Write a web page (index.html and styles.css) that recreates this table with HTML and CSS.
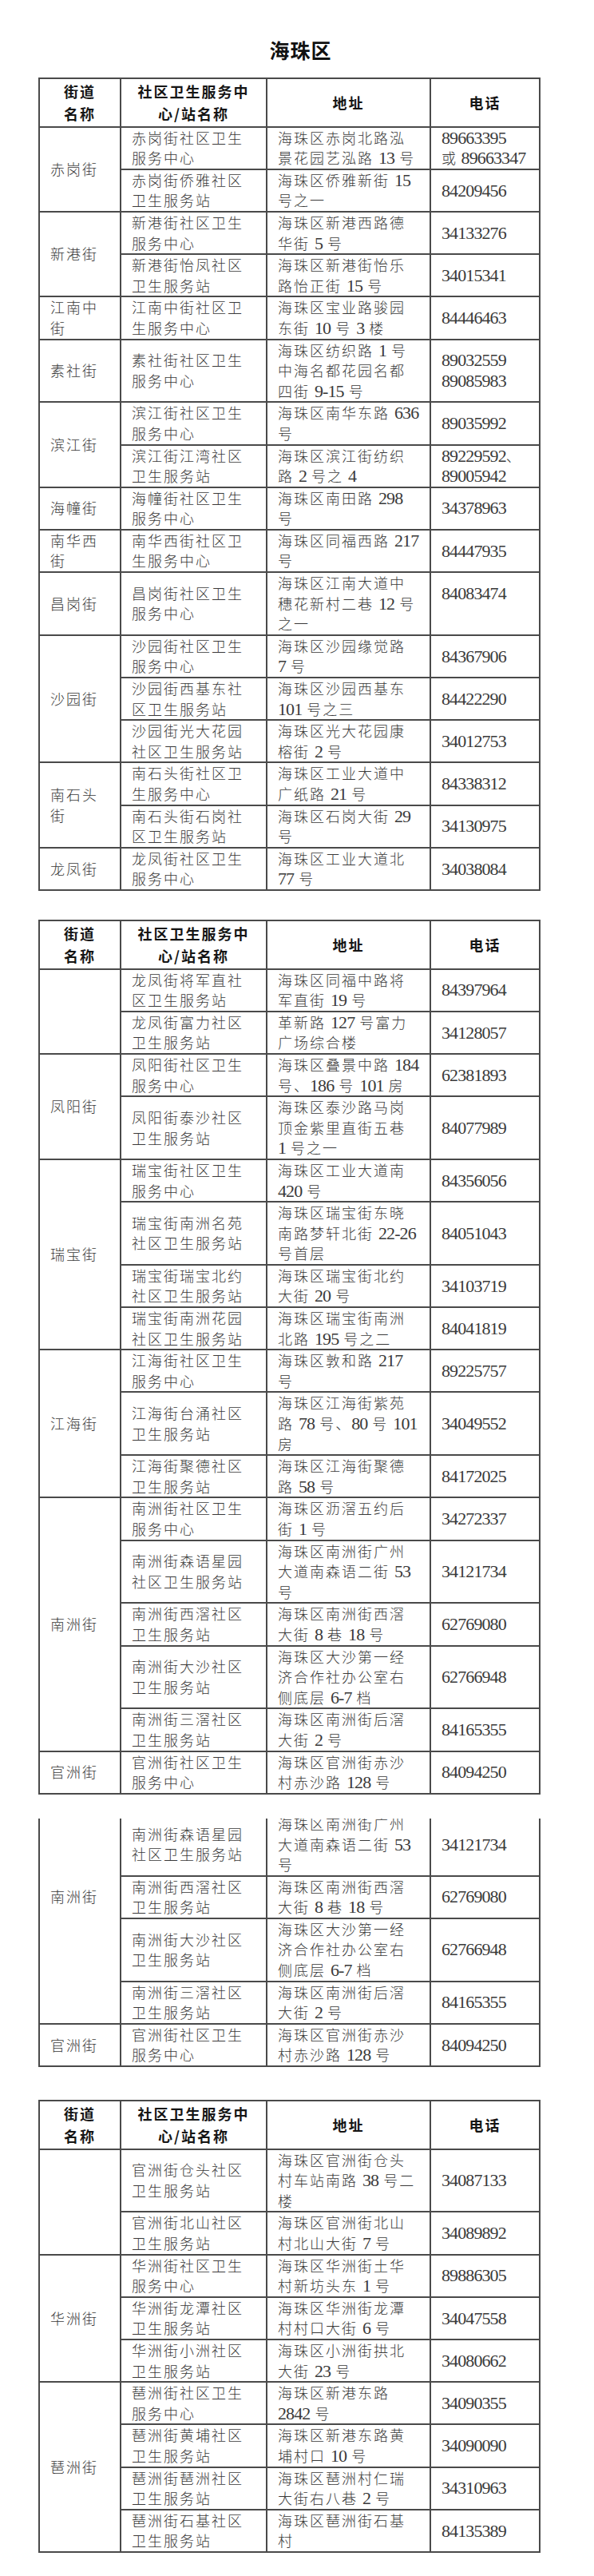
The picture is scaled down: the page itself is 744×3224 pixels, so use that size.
FILE: index.html
```html
<!DOCTYPE html>
<html lang="zh-CN">
<head>
<meta charset="utf-8">
<title>海珠区社区卫生服务中心/站</title>
<link rel="stylesheet" href="styles.css">
</head>
<body>
<div class="page">
  <h1 class="title">海珠区</h1>

  <table class="tbl">
    <colgroup><col class="c1"><col class="c2"><col class="c3"><col class="c4"></colgroup>
    <thead>
      <tr><th>街道<br>名称</th><th>社区卫生服务中<br>心/站名称</th><th>地址</th><th>电话</th></tr>
    </thead>
    <tbody>
      <tr><td rowspan="2">赤岗街</td><td>赤岗街社区卫生<br>服务中心</td><td>海珠区赤岗北路泓<br>景花园艺泓路 <span class="n">13</span> 号</td><td class="tel">89663395<br><span class="c">或</span> 89663347</td></tr>
      <tr><td>赤岗街侨雅社区<br>卫生服务站</td><td>海珠区侨雅新街 <span class="n">15</span><br>号之一</td><td class="tel">84209456</td></tr>
      <tr><td rowspan="2">新港街</td><td>新港街社区卫生<br>服务中心</td><td>海珠区新港西路德<br>华街 <span class="n">5</span> 号</td><td class="tel">34133276</td></tr>
      <tr><td>新港街怡凤社区<br>卫生服务站</td><td>海珠区新港街怡乐<br>路怡正街 <span class="n">15</span> 号</td><td class="tel">34015341</td></tr>
      <tr><td>江南中<br>街</td><td>江南中街社区卫<br>生服务中心</td><td>海珠区宝业路骏园<br>东街 <span class="n">10</span> 号 <span class="n">3</span> 楼</td><td class="tel">84446463</td></tr>
      <tr><td>素社街</td><td>素社街社区卫生<br>服务中心</td><td>海珠区纺织路 <span class="n">1</span> 号<br>中海名都花园名都<br>四街 <span class="n">9-15</span> 号</td><td class="tel">89032559<br>89085983</td></tr>
      <tr><td rowspan="2">滨江街</td><td>滨江街社区卫生<br>服务中心</td><td>海珠区南华东路 <span class="n">636</span><br>号</td><td class="tel">89035992</td></tr>
      <tr><td>滨江街江湾社区<br>卫生服务站</td><td>海珠区滨江街纺织<br>路 <span class="n">2</span> 号之 <span class="n">4</span></td><td class="tel">89229592<span class="c">、</span><br>89005942</td></tr>
      <tr><td>海幢街</td><td>海幢街社区卫生<br>服务中心</td><td>海珠区南田路 <span class="n">298</span><br>号</td><td class="tel">34378963</td></tr>
      <tr><td>南华西<br>街</td><td>南华西街社区卫<br>生服务中心</td><td>海珠区同福西路 <span class="n">217</span><br>号</td><td class="tel">84447935</td></tr>
      <tr><td>昌岗街</td><td>昌岗街社区卫生<br>服务中心</td><td>海珠区江南大道中<br>穗花新村二巷 <span class="n">12</span> 号<br>之一</td><td class="tel raise">84083474</td></tr>
      <tr><td rowspan="3">沙园街</td><td>沙园街社区卫生<br>服务中心</td><td>海珠区沙园缘觉路<br><span class="n">7</span> 号</td><td class="tel">84367906</td></tr>
      <tr><td>沙园街西基东社<br>区卫生服务站</td><td>海珠区沙园西基东<br><span class="n">101</span> 号之三</td><td class="tel">84422290</td></tr>
      <tr><td>沙园街光大花园<br>社区卫生服务站</td><td>海珠区光大花园康<br>榕街 <span class="n">2</span> 号</td><td class="tel">34012753</td></tr>
      <tr><td rowspan="2">南石头<br>街</td><td>南石头街社区卫<br>生服务中心</td><td>海珠区工业大道中<br>广纸路 <span class="n">21</span> 号</td><td class="tel">84338312</td></tr>
      <tr><td>南石头街石岗社<br>区卫生服务站</td><td>海珠区石岗大街 <span class="n">29</span><br>号</td><td class="tel">34130975</td></tr>
      <tr><td>龙凤街</td><td>龙凤街社区卫生<br>服务中心</td><td>海珠区工业大道北<br><span class="n">77</span> 号</td><td class="tel">34038084</td></tr>
    </tbody>
  </table>

  <table class="tbl gap-a">
    <colgroup><col class="c1"><col class="c2"><col class="c3"><col class="c4"></colgroup>
    <thead>
      <tr><th>街道<br>名称</th><th>社区卫生服务中<br>心/站名称</th><th>地址</th><th>电话</th></tr>
    </thead>
    <tbody>
      <tr><td rowspan="2"></td><td>龙凤街将军直社<br>区卫生服务站</td><td>海珠区同福中路将<br>军直街 <span class="n">19</span> 号</td><td class="tel">84397964</td></tr>
      <tr><td>龙凤街富力社区<br>卫生服务站</td><td>革新路 <span class="n">127</span> 号富力<br>广场综合楼</td><td class="tel">34128057</td></tr>
      <tr><td rowspan="2">凤阳街</td><td>凤阳街社区卫生<br>服务中心</td><td>海珠区叠景中路 <span class="n">184</span><br>号、<span class="n">186</span> 号 <span class="n">101</span> 房</td><td class="tel">62381893</td></tr>
      <tr><td>凤阳街泰沙社区<br>卫生服务站</td><td>海珠区泰沙路马岗<br>顶金紫里直街五巷<br><span class="n">1</span> 号之一</td><td class="tel">84077989</td></tr>
      <tr><td rowspan="4">瑞宝街</td><td>瑞宝街社区卫生<br>服务中心</td><td>海珠区工业大道南<br><span class="n">420</span> 号</td><td class="tel">84356056</td></tr>
      <tr><td>瑞宝街南洲名苑<br>社区卫生服务站</td><td>海珠区瑞宝街东晓<br>南路梦轩北街 <span class="n">22-26</span><br>号首层</td><td class="tel">84051043</td></tr>
      <tr><td>瑞宝街瑞宝北约<br>社区卫生服务站</td><td>海珠区瑞宝街北约<br>大街 <span class="n">20</span> 号</td><td class="tel">34103719</td></tr>
      <tr><td>瑞宝街南洲花园<br>社区卫生服务站</td><td>海珠区瑞宝街南洲<br>北路 <span class="n">195</span> 号之二</td><td class="tel">84041819</td></tr>
      <tr><td rowspan="3">江海街</td><td>江海街社区卫生<br>服务中心</td><td>海珠区敦和路 <span class="n">217</span><br>号</td><td class="tel">89225757</td></tr>
      <tr><td>江海街台涌社区<br>卫生服务站</td><td>海珠区江海街紫苑<br>路 <span class="n">78</span> 号、<span class="n">80</span> 号 <span class="n">101</span><br>房</td><td class="tel">34049552</td></tr>
      <tr><td>江海街聚德社区<br>卫生服务站</td><td>海珠区江海街聚德<br>路 <span class="n">58</span> 号</td><td class="tel">84172025</td></tr>
      <tr><td rowspan="5">南洲街</td><td>南洲街社区卫生<br>服务中心</td><td>海珠区沥滘五约后<br>街 <span class="n">1</span> 号</td><td class="tel">34272337</td></tr>
      <tr><td>南洲街森语星园<br>社区卫生服务站</td><td>海珠区南洲街广州<br>大道南森语二街 <span class="n">53</span><br>号</td><td class="tel">34121734</td></tr>
      <tr><td>南洲街西滘社区<br>卫生服务站</td><td>海珠区南洲街西滘<br>大街 <span class="n">8</span> 巷 <span class="n">18</span> 号</td><td class="tel">62769080</td></tr>
      <tr><td>南洲街大沙社区<br>卫生服务站</td><td>海珠区大沙第一经<br>济合作社办公室右<br>侧底层 <span class="n">6-7</span> 档</td><td class="tel">62766948</td></tr>
      <tr><td>南洲街三滘社区<br>卫生服务站</td><td>海珠区南洲街后滘<br>大街 <span class="n">2</span> 号</td><td class="tel">84165355</td></tr>
      <tr><td>官洲街</td><td>官洲街社区卫生<br>服务中心</td><td>海珠区官洲街赤沙<br>村赤沙路 <span class="n">128</span> 号</td><td class="tel">84094250</td></tr>
    </tbody>
  </table>

  <div class="crop">
    <table class="tbl cropped">
      <colgroup><col class="c1"><col class="c2"><col class="c3"><col class="c4"></colgroup>
      <tbody>
        <tr><td rowspan="5">南洲街</td><td>&nbsp;<br>&nbsp;</td><td>&nbsp;<br>&nbsp;</td><td>&nbsp;<br>&nbsp;</td></tr>
        <tr><td>南洲街森语星园<br>社区卫生服务站</td><td>海珠区南洲街广州<br>大道南森语二街 <span class="n">53</span><br>号</td><td class="tel">34121734</td></tr>
        <tr><td>南洲街西滘社区<br>卫生服务站</td><td>海珠区南洲街西滘<br>大街 <span class="n">8</span> 巷 <span class="n">18</span> 号</td><td class="tel">62769080</td></tr>
        <tr><td>南洲街大沙社区<br>卫生服务站</td><td>海珠区大沙第一经<br>济合作社办公室右<br>侧底层 <span class="n">6-7</span> 档</td><td class="tel">62766948</td></tr>
        <tr><td>南洲街三滘社区<br>卫生服务站</td><td>海珠区南洲街后滘<br>大街 <span class="n">2</span> 号</td><td class="tel">84165355</td></tr>
        <tr><td>官洲街</td><td>官洲街社区卫生<br>服务中心</td><td>海珠区官洲街赤沙<br>村赤沙路 <span class="n">128</span> 号</td><td class="tel">84094250</td></tr>
      </tbody>
    </table>
  </div>

  <table class="tbl gap-c">
    <colgroup><col class="c1"><col class="c2"><col class="c3"><col class="c4"></colgroup>
    <thead>
      <tr><th>街道<br>名称</th><th>社区卫生服务中<br>心/站名称</th><th>地址</th><th>电话</th></tr>
    </thead>
    <tbody>
      <tr><td rowspan="2"></td><td>官洲街仓头社区<br>卫生服务站</td><td>海珠区官洲街仓头<br>村车站南路 <span class="n">38</span> 号二<br>楼</td><td class="tel">34087133</td></tr>
      <tr><td>官洲街北山社区<br>卫生服务站</td><td>海珠区官洲街北山<br>村北山大街 <span class="n">7</span> 号</td><td class="tel">34089892</td></tr>
      <tr><td rowspan="3">华洲街</td><td>华洲街社区卫生<br>服务中心</td><td>海珠区华洲街土华<br>村新坊头东 <span class="n">1</span> 号</td><td class="tel">89886305</td></tr>
      <tr><td>华洲街龙潭社区<br>卫生服务站</td><td>海珠区华洲街龙潭<br>村村口大街 <span class="n">6</span> 号</td><td class="tel">34047558</td></tr>
      <tr><td>华洲街小洲社区<br>卫生服务站</td><td>海珠区小洲街拱北<br>大街 <span class="n">23</span> 号</td><td class="tel">34080662</td></tr>
      <tr><td rowspan="4">琶洲街</td><td>琶洲街社区卫生<br>服务中心</td><td>海珠区新港东路<br><span class="n">2842</span> 号</td><td class="tel">34090355</td></tr>
      <tr><td>琶洲街黄埔社区<br>卫生服务站</td><td>海珠区新港东路黄<br>埔村口 <span class="n">10</span> 号</td><td class="tel">34090090</td></tr>
      <tr><td>琶洲街琶洲社区<br>卫生服务站</td><td>海珠区琶洲村仁瑞<br>大街右八巷 <span class="n">2</span> 号</td><td class="tel">34310963</td></tr>
      <tr><td>琶洲街石基社区<br>卫生服务站</td><td>海珠区琶洲街石基<br>村</td><td class="tel">84135389</td></tr>
    </tbody>
  </table>
</div>
</body>
</html>
```

FILE: styles.css
```css
* {
  box-sizing: border-box;
}

body {
  margin: 0;
  background: #ffffff;
  font-family: "Noto Sans CJK SC", "Noto Sans", sans-serif;
  color: #333333;
}

.page {
  padding: 47px 0 30px 48px;
}

.title {
  width: 627px;
  margin: 0 0 20px;
  padding-left: 30px;
  text-align: center;
  font-size: 25px;
  line-height: 30px;
  font-weight: 700;
  letter-spacing: 1px;
  color: #111111;
}

.tbl {
  width: 627px;
  border-collapse: collapse;
  table-layout: fixed;
}

.c1 { width: 102px; }
.c2 { width: 183px; }
.c3 { width: 205px; }
.c4 { width: 137px; }

.tbl th,
.tbl td {
  border: 2px solid #4a4a4a;
  vertical-align: middle;
}

.tbl th {
  padding: 1.3px 2px;
  font-size: 18px;
  line-height: 28px;
  letter-spacing: 2px;
  font-weight: 700;
  text-align: center;
  color: #151515;
}

.tbl td {
  padding: 0 4px 0 13px;
  font-size: 18px;
  line-height: 25.6px;
  letter-spacing: 2px;
  font-weight: 300;
  text-align: left;
  color: #3a3a3a;
}

.n {
  font-family: "Liberation Serif", serif;
  font-size: 22px;
  line-height: 1;
  letter-spacing: -0.9px;
}

.tbl td.tel {
  font-family: "Liberation Serif", "Noto Sans CJK SC", serif;
  font-size: 22px;
  letter-spacing: -0.9px;
}

.c {
  font-family: "Noto Sans CJK SC", sans-serif;
  font-size: 18px;
  line-height: 1;
  letter-spacing: 2px;
}

.tbl td.raise {
  padding-bottom: 26px;
}

.gap-a {
  margin-top: 36px;
}

.crop {
  margin-top: 30px;
  overflow: hidden;
  padding-bottom: 1px;
}

.cropped {
  margin-top: -61px;
}

.gap-c {
  margin-top: 40px;
}
```
